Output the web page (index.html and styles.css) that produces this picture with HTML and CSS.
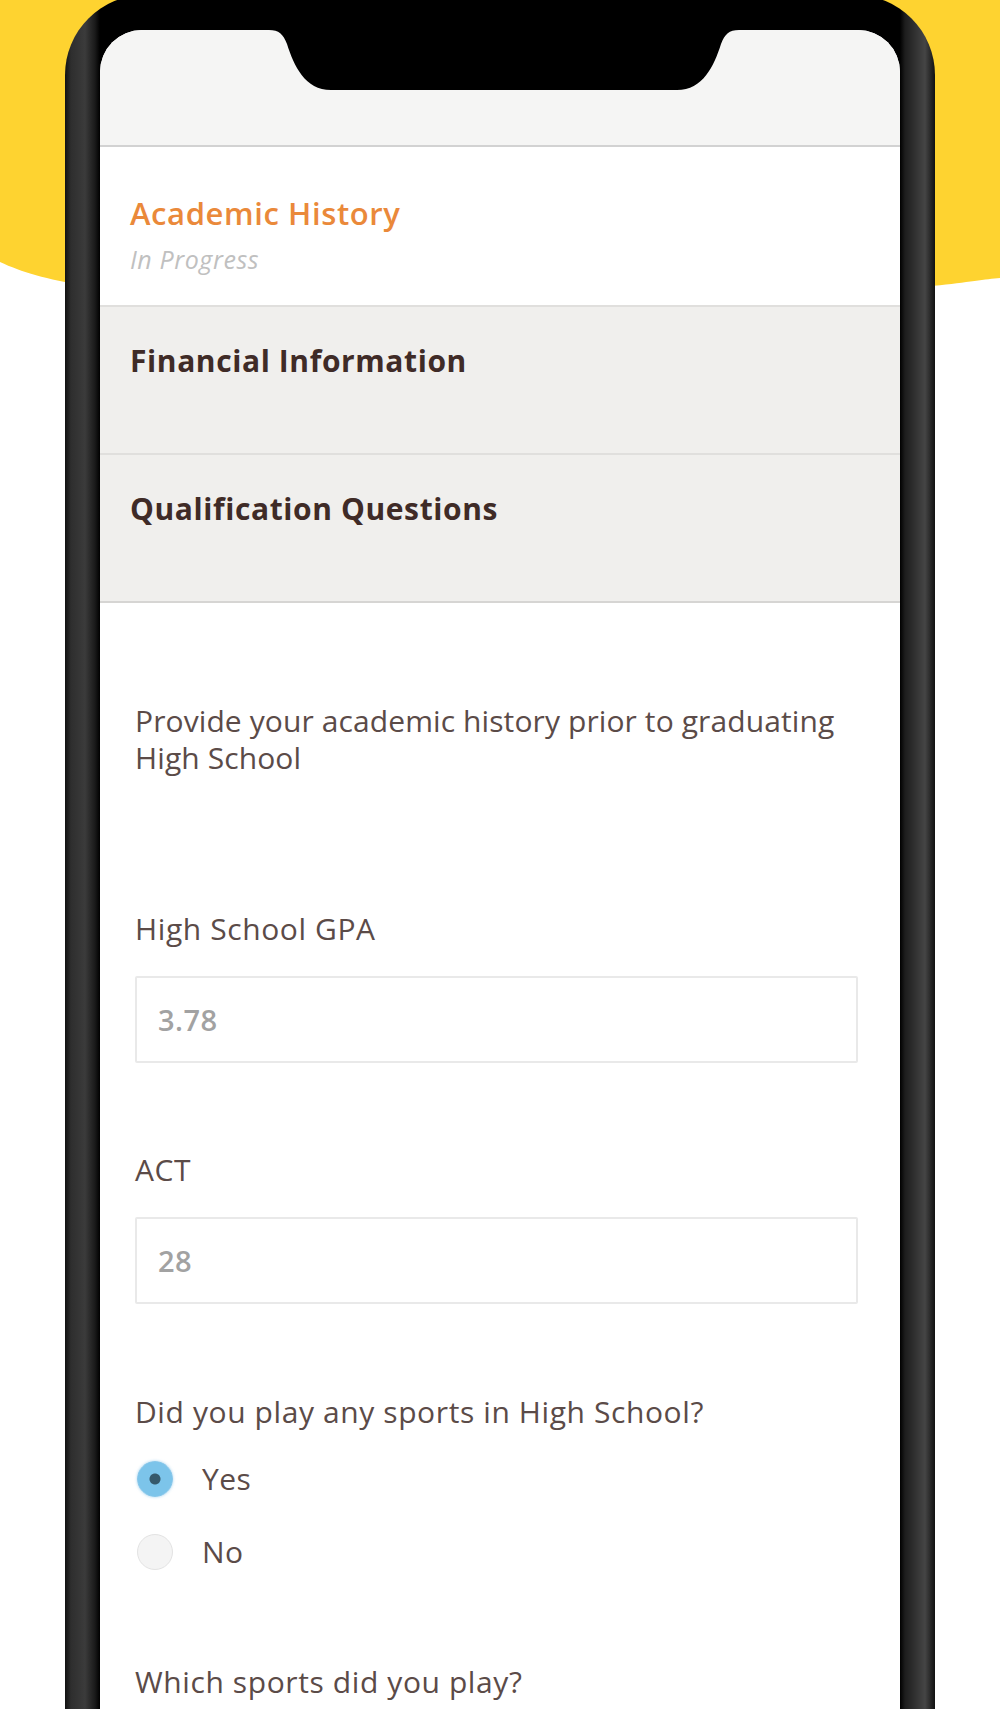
FILE: index.html
```html
<!DOCTYPE html>
<html lang="en">

<head>
    <meta charset="UTF-8">
    <title>Application - Academic History</title>
    <link rel="stylesheet" href="styles.css">
</head>

<body>
    <svg class="backdrop" width="1000" height="320" viewBox="0 0 1000 320">
        <path d="M0 0 H1000 V278 C960 281 900 300 500 300 C150 300 60 290 0 262 Z" fill="#fed330" />
    </svg>

    <div class="phone">
        <div class="screen">
            <svg class="notch" width="470" height="60" viewBox="0 0 470 60">
                <path d="M0 0 C10 0 14 4 18 14 C25 36 36 60 62 60 H408 C434 60 445 36 452 14 C456 4 460 0 470 0 Z" fill="#000" />
            </svg>
            <div class="status-bar"></div>

            <section class="step step-current">
                <h2 class="step-title">Academic History</h2>
                <p class="step-status">In Progress</p>
            </section>
            <section class="step step-closed">
                <h2 class="step-title">Financial Information</h2>
            </section>
            <section class="step step-closed">
                <h2 class="step-title">Qualification Questions</h2>
            </section>

            <form class="form">
                <p class="intro">Provide your academic history prior to graduating High School</p>

                <div class="field">
                    <label class="field-label" for="gpa">High School GPA</label>
                    <input class="text-input" id="gpa" type="text" value="3.78">
                </div>

                <div class="field">
                    <label class="field-label" for="act">ACT</label>
                    <input class="text-input" id="act" type="text" value="28">
                </div>

                <div class="field field-question">
                    <p class="field-label">Did you play any sports in High School?</p>
                    <div class="options">
                        <label class="option"><input type="radio" name="sports" checked> Yes</label>
                        <label class="option"><input type="radio" name="sports"> No</label>
                    </div>
                </div>

                <div class="field field-next">
                    <p class="field-label">Which sports did you play?</p>
                </div>
            </form>
        </div>
    </div>
</body>

</html>
```

FILE: styles.css
```css
html,
body {
    margin: 0;
    height: 1709px;
    overflow: hidden;
}

body {
    position: relative;
    background: #fff;
    font-family: "Open Sans", "Liberation Sans", sans-serif;
    color: #5b4b48;
}

/* yellow blob behind the phone */
.backdrop {
    position: absolute;
    left: 0;
    top: 0;
    display: block;
}

.phone {
    position: relative;
    box-sizing: border-box;
    width: 870px;
    height: 1800px;
    margin: -5px 0 0 65px;
    padding: 35px;
    border-radius: 80px 80px 0 0;
    background: linear-gradient(90deg,
            #111 0, #2e2e2e 6px, #3b3b3b 20px, #1a1a1a 30px, #000 35px,
            #000 calc(100% - 35px), #1d1d1d calc(100% - 30px), #454545 calc(100% - 10px), #111 100%);
}

.screen {
    position: relative;
    height: 100%;
    border-radius: 42px 42px 0 0;
    background: #fff;
    overflow: hidden;
}

.notch {
    position: absolute;
    top: 0;
    left: 169px;
    display: block;
}

.status-bar {
    height: 115px;
    background: #f5f5f4;
    border-bottom: 2px solid #d2d2d2;
}

.step {
    margin: 0;
    padding: 36px 30px 74px;
}

.step-title {
    margin: 0;
    font-size: 30px;
    line-height: 36px;
    font-weight: 700;
    letter-spacing: 0.6px;
    color: #3f2b27;
}

.step-current {
    padding: 48px 30px 31px;
}

.step-current .step-title {
    font-size: 31px;
    font-weight: 600;
    letter-spacing: 0.6px;
    color: #ea893a;
}

.step-status {
    margin: 13px 0 0;
    font-size: 25px;
    line-height: 30px;
    font-style: italic;
    letter-spacing: 0.6px;
    color: #c0c0c0;
}

.step-closed {
    background: #f0efed;
    border-top: 2px solid #e0dfdd;
}

.step-closed:last-of-type {
    border-bottom: 2px solid #d6d5d3;
}

.form {
    padding: 99px 42px 0 35px;
    font-size: 30px;
    line-height: 37px;
}

.intro {
    margin: 0;
    letter-spacing: 0.1px;
}

.field {
    margin-top: 134px;
}

.field + .field {
    margin-top: 88px;
}

.field-question {
    margin-top: 89px !important;
}

.field-next {
    margin-top: 93px !important;
}

.field-label {
    display: block;
    margin: 0;
    letter-spacing: 0.6px;
}

.text-input {
    display: block;
    box-sizing: border-box;
    width: 100%;
    height: 87px;
    margin-top: 29px;
    padding: 0 21px;
    border: 2px solid #e9e9e9;
    border-radius: 2px;
    background: #fff;
    font: 600 29px "Open Sans", sans-serif;
    letter-spacing: 0.5px;
    color: #a2a2a2;
    outline: none;
}

.options {
    display: flex;
    flex-direction: column;
    gap: 36px;
    margin-top: 30px;
}

.option {
    display: flex;
    align-items: center;
    gap: 29px;
    height: 37px;
    padding-left: 2px;
    letter-spacing: 0.4px;
}

.option input {
    appearance: none;
    width: 36px;
    height: 36px;
    margin: 0;
    border: 1px solid #e3e3e3;
    border-radius: 50%;
    background: #f4f4f4;
}

.option input:checked {
    border-color: #86c6ea;
    background: radial-gradient(circle, #36596b 0 5px, #7cc4ea 6px);
    box-shadow: 0 0 3px rgba(110, 185, 230, 0.6);
}
```
